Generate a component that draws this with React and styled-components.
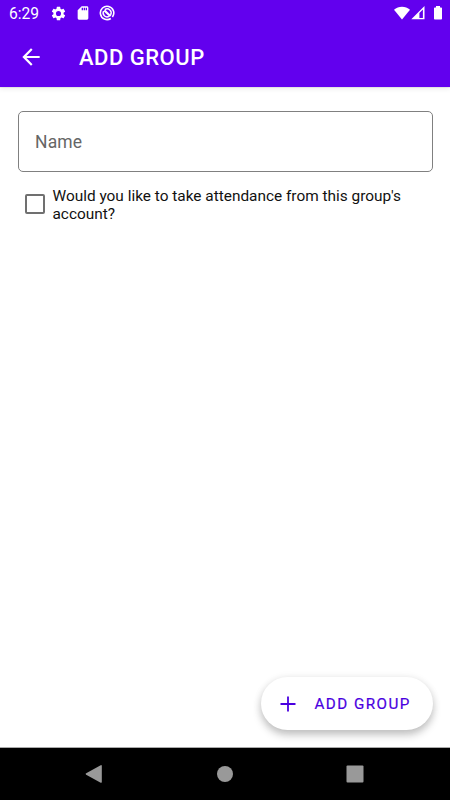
import React from "react";
import styled, { createGlobalStyle } from "styled-components";

const GlobalStyle = createGlobalStyle`
  * { box-sizing: border-box; }
  body { margin: 0; background: #fff; font-family: Roboto, sans-serif; }
  svg { display: block; flex: none; }
`;

const Screen = styled.div`
  width: 450px;
  height: 800px;
  display: flex;
  flex-direction: column;
  overflow: hidden;
  background: #fff;
`;

const Header = styled.header`
  flex: none;
  height: 87px;
  background: #6200ee;
  color: #fff;
  box-shadow: 0 0 1px rgba(0, 0, 0, 0.35), 0 2px 5px rgba(0, 0, 0, 0.08);
`;

const StatusBar = styled.div`
  height: 26px;
  display: flex;
  align-items: center;
  justify-content: space-between;
  padding: 0 7px 0 9px;
`;

const StatusGroup = styled.div`
  display: flex;
  align-items: center;
  gap: ${(p) => p.$gap}px;
`;

const Clock = styled.span`
  width: 32px;
  margin-right: 1px;
  font-size: 15.6px;
  line-height: 26px;
  padding-top: 1px;
`;

const Toolbar = styled.div`
  height: 61px;
  display: flex;
  align-items: center;
  gap: 35px;
  padding-left: 18px;
`;

const IconButton = styled.button`
  border: 0;
  padding: 0;
  background: none;
  color: inherit;
`;

const Title = styled.h1`
  margin: 2px 0 0;
  font-size: 22px;
  font-weight: 500;
  line-height: 30px;
  letter-spacing: 0.5px;
`;

const Content = styled.main`
  flex: 1;
  display: flex;
  flex-direction: column;
  padding: 24px 17.5px 17.5px;
`;

const Field = styled.input`
  width: 415px;
  height: 61px;
  border: 1px solid #808080;
  border-radius: 5px;
  padding: 0 16.5px;
  outline: none;
  background: #fff;
  font: 400 17.5px Roboto, sans-serif;
  letter-spacing: 0.15px;
  &::placeholder { color: #666; opacity: 1; }
`;

const CheckRow = styled.label`
  display: flex;
  align-items: center;
  gap: 8px;
  margin-top: 15px;
  padding-left: 7.5px;
  color: #111;
  font-size: 15.4px;
  line-height: 18px;
`;

const CheckBox = styled.span`
  flex: none;
  width: 20px;
  height: 20px;
  margin-bottom: 2px;
  border: 2px solid #707070;
  border-radius: 2px;
`;

const CheckLabel = styled.span`
  margin-left: -0.5px;
`;

const Fab = styled.button`
  align-self: flex-end;
  margin-top: auto;
  width: 172px;
  height: 53px;
  display: flex;
  align-items: center;
  gap: 14px;
  padding: 1px 0 0 14px;
  border: 0;
  border-radius: 27px;
  background: #fff;
  color: #4a00e0;
  font: 400 15.2px Roboto, sans-serif;
  letter-spacing: 1.45px;
  -webkit-text-stroke: 0.2px currentColor;
  box-shadow: 0 5px 9px rgba(0, 0, 0, 0.22), 0 1px 8px rgba(0, 0, 0, 0.08);
`;

const NavBar = styled.nav`
  flex: none;
  height: 53px;
  display: flex;
  align-items: center;
  justify-content: space-between;
  padding: 0 86px 0 85px;
  border-top: 1px solid #aaa;
  background: #000;
`;

const NavIcon = styled.svg.attrs({ width: 18, height: 18, viewBox: "0 0 18 18" })`
  fill: #999;
`;

export default function App() {
  return (
    <Screen>
      <GlobalStyle />
      <Header>
        <StatusBar>
          <StatusGroup $gap={8}>
            <Clock>6:29</Clock>
            <svg width="17" height="17" viewBox="0 0 24 24" fill="currentColor">
              <path d="M19.14 12.94c.04-.3.06-.61.06-.94s-.02-.64-.07-.94l2.03-1.58a.49.49 0 0 0 .12-.61l-1.92-3.32a.49.49 0 0 0-.59-.22l-2.39.96a7 7 0 0 0-1.62-.94l-.36-2.54a.48.48 0 0 0-.48-.41h-3.84a.47.47 0 0 0-.47.41l-.36 2.54c-.59.24-1.13.57-1.62.94l-2.39-.96a.47.47 0 0 0-.59.22L2.74 8.87a.48.48 0 0 0 .12.61l2.03 1.58a6 6 0 0 0 0 1.88l-2.03 1.58a.49.49 0 0 0-.12.61l1.92 3.32c.12.22.37.29.59.22l2.39-.96c.5.38 1.03.7 1.62.94l.36 2.54c.05.24.24.41.48.41h3.84c.24 0 .44-.17.47-.41l.36-2.54a7 7 0 0 0 1.62-.94l2.39.96c.22.08.47 0 .59-.22l1.92-3.32a.47.47 0 0 0-.12-.61zM12 15.6a3.6 3.6 0 1 1 0-7.2 3.6 3.6 0 0 1 0 7.2z" />
            </svg>
            <svg width="16" height="16" viewBox="0 0 24 24" fill="currentColor">
              <path d="M18 2h-8L4 8v12a2 2 0 0 0 2 2h12a2 2 0 0 0 2-2V4a2 2 0 0 0-2-2zm-6 6h-2V4h2zm3 0h-2V4h2zm3 0h-2V4h2z" />
            </svg>
            <svg width="16" height="16" viewBox="0 0 16 16" fill="none" stroke="currentColor">
              <path d="M11.8 13.5A6.7 6.7 0 1 1 13.4 12" strokeWidth="1.6" />
              <path d="M11.5 10A4 4 0 0 0 5.8 4.6M4.6 6A4 4 0 0 0 10 11.4" strokeWidth="1.4" />
              <path d="M5.3 5.4 11.5 11.2" strokeWidth="2.2" />
            </svg>
          </StatusGroup>
          <StatusGroup $gap={1}>
            <svg width="16" height="14" viewBox="0 0 16 14" fill="currentColor">
              <path d="M0 3.7C4.4-.2 11.6-.2 16 3.7L8 13.4z" />
            </svg>
            <svg width="14" height="14" viewBox="0 0 14 14" fill="currentColor">
              <path fillRule="evenodd" d="M.3 13.3 13.5.1v13.2zM8.4 7v4.9h3.5V3.6z" />
            </svg>
            <svg width="17" height="14" viewBox="0 0 17 14" fill="currentColor">
              <path d="M10 0h4v1.4h1.2q.8 0 .8.8v10.5q0 .8-.8.8H8.8q-.8 0-.8-.8V2.2q0-.8.8-.8H10z" />
            </svg>
          </StatusGroup>
        </StatusBar>
        <Toolbar>
          <IconButton aria-label="Back">
            <svg width="26" height="26" viewBox="0 0 24 24" fill="currentColor">
              <path d="M20 11H7.83l5.59-5.59L12 4l-8 8 8 8 1.41-1.41L7.83 13H20z" />
            </svg>
          </IconButton>
          <Title>ADD GROUP</Title>
        </Toolbar>
      </Header>
      <Content>
        <Field placeholder="Name" aria-label="Name" />
        <CheckRow>
          <CheckBox role="checkbox" aria-checked="false" />
          <CheckLabel>
            Would you like to take attendance from this group's
            <br />
            account?
          </CheckLabel>
        </CheckRow>
        <Fab>
          <svg width="26" height="26" viewBox="0 0 26 26" fill="currentColor">
            <path d="M20.5 12.1h-6.6V5.5h-1.8v6.6H5.5v1.8h6.6v6.6h1.8v-6.6h6.6z" />
          </svg>
          ADD GROUP
        </Fab>
      </Content>
      <NavBar>
        <NavIcon><path d="M1.2 8.3 15.7.2q1.1-.4 1.1.7v16.2q0 1.1-1.1.6L1.2 9.7q-1.1-.7 0-1.4z" /></NavIcon>
        <NavIcon><circle cx="9" cy="9" r="8" /></NavIcon>
        <NavIcon><rect x=".5" y=".5" width="17" height="17" rx="1" /></NavIcon>
      </NavBar>
    </Screen>
  );
}
